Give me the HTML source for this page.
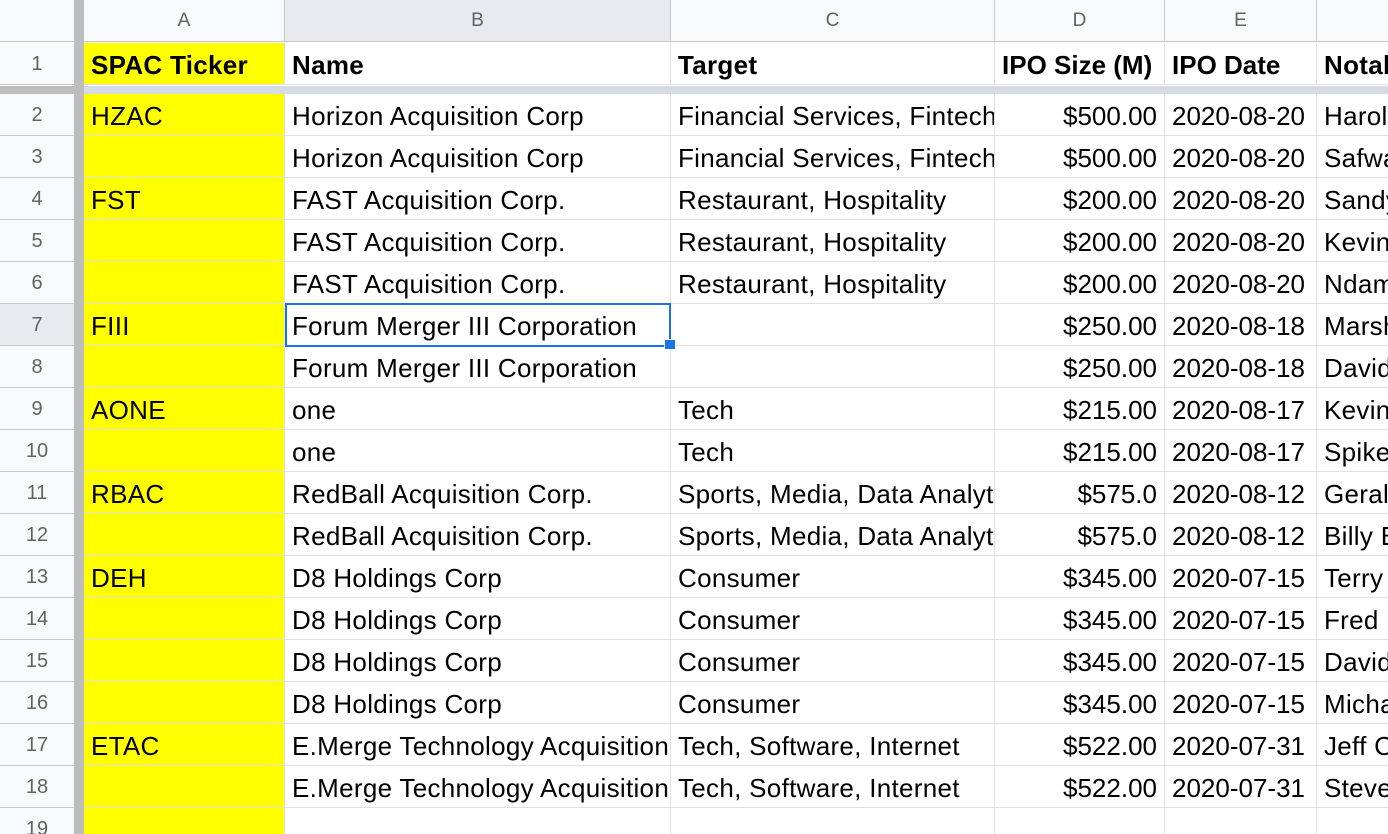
<!DOCTYPE html><html><head><style>
html,body{margin:0;width:1388px;height:834px;overflow:hidden}
body{background:#fff;font-family:"Liberation Sans",Arial,sans-serif;position:relative}
.r{position:absolute;left:0;width:1388px;height:42px}
.c{position:absolute;top:0;height:41px;border-right:1px solid #e0e0e0;border-bottom:1px solid #e0e0e0;font-size:26px;letter-spacing:0.3px;line-height:44px;padding:0 7px;box-sizing:content-box;white-space:nowrap;overflow:hidden;color:#000}
.n{left:0;width:74px;padding:0;text-align:center;color:#5f6368;font-size:20px;letter-spacing:0;line-height:42px;background:#f8f9fa;border-right:none;border-bottom:1px solid #c8c8c8}
.a{left:84px;width:186px;background:#ffff00}
.b{left:285px;width:371px}
.cc{left:671px;width:309px}
.d{left:995px;width:155px;text-align:right;letter-spacing:0}
.e{left:1165px;width:137px;letter-spacing:0}
.f{left:1317px;width:100px}
.fz{position:absolute;left:74px;top:0;width:10px;height:834px;background:#bdbdbd}
.h{position:absolute;top:0;height:42px;background:#f8f9fa;border-right:1px solid #c8c8c8;border-bottom:1px solid #c8c8c8;text-align:center;line-height:42px;font-size:19px;color:#5f6368;box-sizing:border-box}
b{font-weight:bold}
</style></head><body>
<div class="h" style="left:0;width:74px;border-right:none"></div>
<div class="h" style="left:84px;width:201px">A</div>
<div class="h" style="left:285px;width:386px;background:#e8eaed">B</div>
<div class="h" style="left:671px;width:324px">C</div>
<div class="h" style="left:995px;width:170px">D</div>
<div class="h" style="left:1165px;width:152px">E</div>
<div class="h" style="left:1317px;width:100px"></div>
<div class="r" style="top:43px;height:43px"><div class="c n">1</div><div class="c a"><b>SPAC Ticker</b></div><div class="c b"><b>Name</b></div><div class="c cc"><b>Target</b></div><div class="c d" style="text-align:left"><b>IPO Size (M)</b></div><div class="c e"><b>IPO Date</b></div><div class="c f"><b>Notable</b></div></div>
<div style="position:absolute;left:0;top:86px;width:84px;height:8px;background:#bdbdbd"></div>
<div style="position:absolute;left:84px;top:86px;width:1304px;height:8px;background:#d5dbe3"></div>
<div class="r" style="top:94px"><div class="c n">2</div><div class="c a">HZAC</div><div class="c b">Horizon Acquisition Corp</div><div class="c cc">Financial Services, Fintech</div><div class="c d">$500.00</div><div class="c e">2020-08-20</div><div class="c f">Harold</div></div>
<div class="r" style="top:136px"><div class="c n">3</div><div class="c a"></div><div class="c b">Horizon Acquisition Corp</div><div class="c cc">Financial Services, Fintech</div><div class="c d">$500.00</div><div class="c e">2020-08-20</div><div class="c f">Safwan</div></div>
<div class="r" style="top:178px"><div class="c n">4</div><div class="c a">FST</div><div class="c b">FAST Acquisition Corp.</div><div class="c cc">Restaurant, Hospitality</div><div class="c d">$200.00</div><div class="c e">2020-08-20</div><div class="c f">Sandy</div></div>
<div class="r" style="top:220px"><div class="c n">5</div><div class="c a"></div><div class="c b">FAST Acquisition Corp.</div><div class="c cc">Restaurant, Hospitality</div><div class="c d">$200.00</div><div class="c e">2020-08-20</div><div class="c f">Kevin</div></div>
<div class="r" style="top:262px"><div class="c n">6</div><div class="c a"></div><div class="c b">FAST Acquisition Corp.</div><div class="c cc">Restaurant, Hospitality</div><div class="c d">$200.00</div><div class="c e">2020-08-20</div><div class="c f">Ndamu</div></div>
<div class="r" style="top:304px"><div class="c n" style="background:#e8eaed">7</div><div class="c a">FIII</div><div class="c b">Forum Merger III Corporation</div><div class="c cc"></div><div class="c d">$250.00</div><div class="c e">2020-08-18</div><div class="c f">Marsh</div></div>
<div class="r" style="top:346px"><div class="c n">8</div><div class="c a"></div><div class="c b">Forum Merger III Corporation</div><div class="c cc"></div><div class="c d">$250.00</div><div class="c e">2020-08-18</div><div class="c f">David</div></div>
<div class="r" style="top:388px"><div class="c n">9</div><div class="c a">AONE</div><div class="c b">one</div><div class="c cc">Tech</div><div class="c d">$215.00</div><div class="c e">2020-08-17</div><div class="c f">Kevin</div></div>
<div class="r" style="top:430px"><div class="c n">10</div><div class="c a"></div><div class="c b">one</div><div class="c cc">Tech</div><div class="c d">$215.00</div><div class="c e">2020-08-17</div><div class="c f">Spike</div></div>
<div class="r" style="top:472px"><div class="c n">11</div><div class="c a">RBAC</div><div class="c b">RedBall Acquisition Corp.</div><div class="c cc">Sports, Media, Data Analytics</div><div class="c d">$575.0</div><div class="c e">2020-08-12</div><div class="c f">Gerald</div></div>
<div class="r" style="top:514px"><div class="c n">12</div><div class="c a"></div><div class="c b">RedBall Acquisition Corp.</div><div class="c cc">Sports, Media, Data Analytics</div><div class="c d">$575.0</div><div class="c e">2020-08-12</div><div class="c f">Billy B</div></div>
<div class="r" style="top:556px"><div class="c n">13</div><div class="c a">DEH</div><div class="c b">D8 Holdings Corp</div><div class="c cc">Consumer</div><div class="c d">$345.00</div><div class="c e">2020-07-15</div><div class="c f">Terry</div></div>
<div class="r" style="top:598px"><div class="c n">14</div><div class="c a"></div><div class="c b">D8 Holdings Corp</div><div class="c cc">Consumer</div><div class="c d">$345.00</div><div class="c e">2020-07-15</div><div class="c f">Fred</div></div>
<div class="r" style="top:640px"><div class="c n">15</div><div class="c a"></div><div class="c b">D8 Holdings Corp</div><div class="c cc">Consumer</div><div class="c d">$345.00</div><div class="c e">2020-07-15</div><div class="c f">David</div></div>
<div class="r" style="top:682px"><div class="c n">16</div><div class="c a"></div><div class="c b">D8 Holdings Corp</div><div class="c cc">Consumer</div><div class="c d">$345.00</div><div class="c e">2020-07-15</div><div class="c f">Michael</div></div>
<div class="r" style="top:724px"><div class="c n">17</div><div class="c a">ETAC</div><div class="c b">E.Merge Technology Acquisition</div><div class="c cc">Tech, Software, Internet</div><div class="c d">$522.00</div><div class="c e">2020-07-31</div><div class="c f">Jeff C</div></div>
<div class="r" style="top:766px"><div class="c n">18</div><div class="c a"></div><div class="c b">E.Merge Technology Acquisition</div><div class="c cc">Tech, Software, Internet</div><div class="c d">$522.00</div><div class="c e">2020-07-31</div><div class="c f">Steve</div></div>
<div class="r" style="top:808px"><div class="c n">19</div><div class="c a"></div><div class="c b"></div><div class="c cc"></div><div class="c d"></div><div class="c e"></div><div class="c f"></div></div>
<div class="fz"></div>
<div style="position:absolute;left:285px;top:303px;width:382px;height:40px;border:2px solid #1a73e8"></div>
<div style="position:absolute;left:664px;top:339px;width:12px;height:11px;background:#1a73e8;border:1px solid #fff;box-sizing:border-box"></div>
</body></html>
